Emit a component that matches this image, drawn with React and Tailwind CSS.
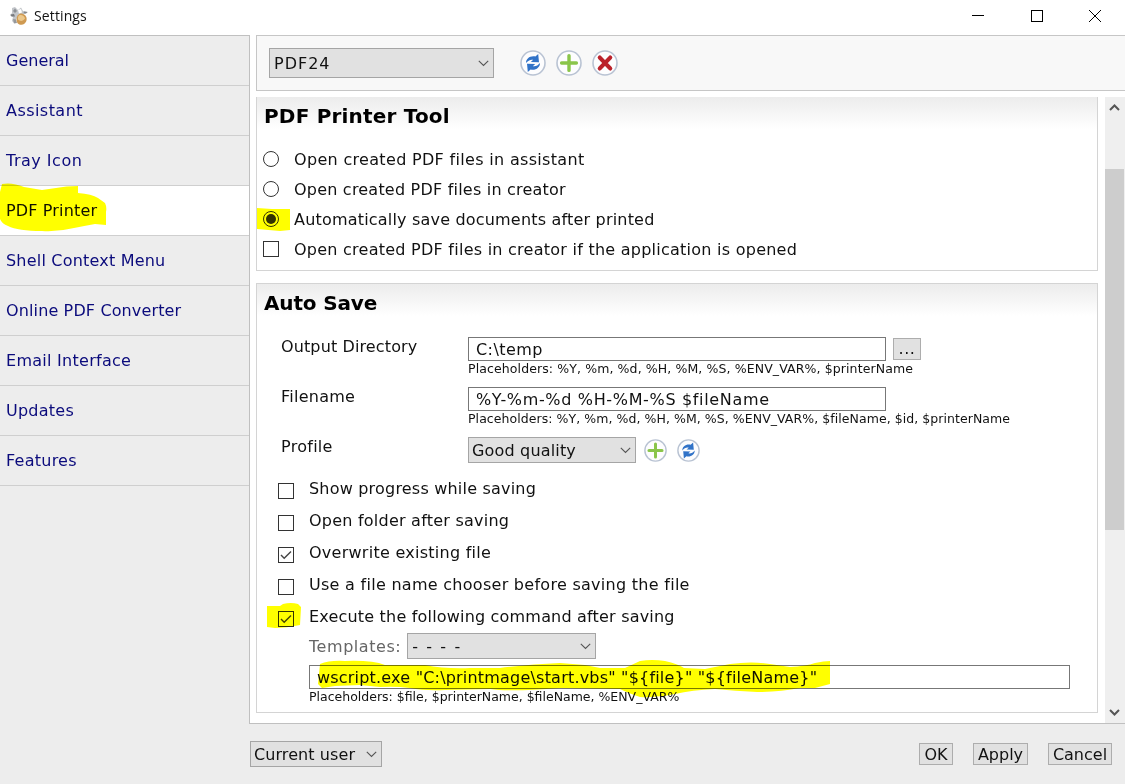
const SANS = "font-['DejaVu_Sans',sans-serif]";

function Chevron() {
  return (
    <svg width="11" height="7" viewBox="0 0 11 7" fill="none" stroke="#555" strokeWidth="1.1" className="shrink-0">
      <path d="M0.8 0.8L5.5 5.5L10.2 0.8" />
    </svg>
  );
}

function Select({ text, className, textClass = "" }) {
  return (
    <button className={`flex items-center justify-between border border-[#a5a5a5] bg-[#e1e1e1] text-left ${className}`}>
      <span className={`whitespace-nowrap ${textClass}`}>{text}</span>
      <Chevron />
    </button>
  );
}

const ARROW = "M6 13C6 8.5 10 5.4 15.4 6.4L18.2 4L19 12.2L10.8 12L13.2 9.8C10.4 9.2 8 10.6 6 13Z";

function RoundIcon({ kind, size }) {
  return (
    <svg width={size} height={size} viewBox="0 0 26 26" fill="none" className="shrink-0">
      <circle cx="13" cy="13" r="12" fill="#fdfdfe" stroke="#b9c3d3" strokeWidth="1.6" />
      {kind === "add" && <path d="M13 5.6V20.4M5.6 13H20.4" stroke="#8ac54a" strokeWidth="3.4" strokeLinecap="round" />}
      {kind === "delete" && <path d="M7.8 7.6L18.2 18.4M18.2 7.6L7.8 18.4" stroke="#bb222b" strokeWidth="4.2" strokeLinecap="round" />}
      {kind === "sync" && (
        <g fill="#3173c8">
          <path d={ARROW} />
          <path d={ARROW} transform="rotate(180 13 13)" />
        </g>
      )}
    </svg>
  );
}

function Box({ checked, className = "bg-white" }) {
  return (
    <span className={`flex h-4 w-4 shrink-0 items-center justify-center border border-[#333] ${className}`}>
      {checked && (
        <svg width="12" height="10" viewBox="0 0 12 10" fill="none" stroke="#444" strokeWidth="1.4">
          <path d="M1 5L4.2 8.3L11 1.4" />
        </svg>
      )}
    </span>
  );
}

function Radio({ checked }) {
  return (
    <span className="flex h-4 w-4 shrink-0 items-center justify-center rounded-full border border-[#333] bg-white">
      {checked && <span className="h-2.5 w-2.5 rounded-full bg-[#333]" />}
    </span>
  );
}

const nav = [
  { text: "General", track: "" },
  { text: "Assistant", track: "tracking-[0.45px]" },
  { text: "Tray Icon", track: "tracking-[0.5px]" },
  { text: "PDF Printer", track: "tracking-[0.15px]" },
  { text: "Shell Context Menu", track: "tracking-[0.2px]" },
  { text: "Online PDF Converter", track: "tracking-[0.13px]" },
  { text: "Email Interface", track: "tracking-[0.27px]" },
  { text: "Updates", track: "tracking-[0.25px]" },
  { text: "Features", track: "tracking-[0.25px]" },
];

const printerOptions = [
  { text: "Open created PDF files in assistant", radio: true, track: "tracking-[0.32px]" },
  { text: "Open created PDF files in creator", radio: true, track: "tracking-[0.21px]" },
  { text: "Automatically save documents after printed", radio: true, checked: true, track: "tracking-[0.19px]" },
  { text: "Open created PDF files in creator if the application is opened", track: "tracking-[0.25px]" },
];

const saveOptions = [
  { text: "Show progress while saving", track: "tracking-[0.2px]" },
  { text: "Open folder after saving", track: "tracking-[0.23px]" },
  { text: "Overwrite existing file", checked: true, track: "tracking-[0.26px]" },
  { text: "Use a file name chooser before saving the file", track: "tracking-[0.28px]" },
  { text: "Execute the following command after saving", checked: true, track: "tracking-[0.19px]" },
];

function Logo() {
  return (
    <svg width="20" height="20" viewBox="0 0 20 20" className="shrink-0">
      <path d="M3 2L6 1L9 4L12 1.5L14 5L19 6L16 8L10 8L8 12L5 17L3 15L4 11L1 9.5L3 7Z" fill="#c3c6ca" />
      <path d="M6 2.5L8 5L6 7L4 5Z" fill="#8b8f94" />
      <path d="M1.5 8.5L5 8L6 10.5L2.5 10.5Z" fill="#77797d" />
      <path d="M9 4L12 3L13 6.5L10 7.5Z" fill="#ffffff" />
      <path d="M15 5.5L18.5 6L17 7.5L14.5 7.2Z" fill="#85888c" />
      <path d="M4 13L7 13.5L8 17L5 17.5Z" fill="#96989b" />
      <path d="M9.5 8.5C12 6.5 16 8 17.3 11C18.5 14.5 16.5 18.5 12.5 18.8C9 19 7.2 16 7.6 13C7.8 11 8.3 9.5 9.5 8.5Z" fill="#cf9a52" />
      <path d="M10 9.5C12.5 8.2 15.5 10 16 12.5C14 15.5 11 15.5 9 13.5C8.8 12 9 10.5 10 9.5Z" fill="#ecc88c" />
    </svg>
  );
}

function Marker() {
  return (
    <svg width="1125" height="784" fill="#ffff00" className="pointer-events-none absolute inset-0 mix-blend-multiply">
      <path d="M2 184Q12 182 24 187L42 190L56 188Q66 186 78 186V193Q92 194 98 198L105 203Q107 207 106 212V225L95 224Q84 226 74 228Q58 232 42 231Q18 231 8 226Q2 224 0 219V192Z" />
      <path d="M257 208L272 209L290 209V230L280 231L257 229Z" />
      <path d="M267 606H280L283 604Q291 602 298 604L301 607L300 625Q286 628 275 628L267 627Z" />
      <path d="M318 684L320 664Q330 660 345 661Q372 660 385 665H425Q445 669 470 668H500Q530 664 560 663L585 665L600 668H625L640 661Q652 659 665 661Q678 664 684 668L705 669L730 664Q752 661 770 664L790 667Q806 666 815 663Q824 661 830 661V684L815 688H800Q780 692 757 692Q735 691 715 689Q692 690 675 694Q658 698 640 697Q628 693 620 689L560 688Q510 692 490 689L445 690Q425 691 410 688Q395 686 380 687L360 685L335 686L322 688Z" />
    </svg>
  );
}

export default function App() {
  return (
    <div className={`relative flex h-[784px] w-[1125px] flex-col overflow-hidden bg-white text-[16px] leading-5 text-[#111] ${SANS}`}>
      <header className="flex h-[35px] shrink-0 items-center justify-between bg-white pb-[3px] pl-[9px] pr-6">
        <div className="flex items-center gap-[5px]">
          <Logo />
          <span className="font-['Open_Sans',sans-serif] text-[14px] tracking-[0.12px]">Settings</span>
        </div>
        <div className="flex items-center gap-[46.5px]">
          <svg width="12" height="12"><path d="M0 5.5H12" stroke="#000" /></svg>
          <svg width="12" height="12"><rect x="0.5" y="0.5" width="11" height="11" fill="none" stroke="#000" /></svg>
          <svg width="12" height="12"><path d="M0 0L12 12M12 0L0 12" stroke="#000" /></svg>
        </div>
      </header>

      <div className="flex h-[689px] shrink-0">
        <nav className="w-[250px] shrink-0 border-r border-t border-[#c0c0c0] bg-[#ededed]">
          {nav.map((n) => (
            <div key={n.text} className={`flex h-[50px] items-center border-b border-[#cfcfcf] pl-[6px] ${n.track} ${n.text === "PDF Printer" ? "bg-white text-[#111]" : "text-[#0b0b7c]"}`}>
              {n.text}
            </div>
          ))}
        </nav>

        <main className="flex min-w-0 flex-1 flex-col border-b border-[#c0c0c0] pl-[6px]">
          <div className="flex h-[56px] shrink-0 items-center border-y border-l border-[#c6c6c6] bg-[#f8f8f8] pl-3">
            <Select text="PDF24" className="h-[30px] w-[225px] pl-1 pr-1" textClass="pt-0.5 tracking-[1px]" />
            <div className="ml-[26px] flex gap-[10px]">
              <RoundIcon kind="sync" size={26} />
              <RoundIcon kind="add" size={26} />
              <RoundIcon kind="delete" size={26} />
            </div>
          </div>

          <div className="mt-[6px] flex min-h-0 flex-1">
            <div className="w-[842px] shrink-0">
              <section className="h-[174px] border-x border-b border-[#d4d4d4] bg-linear-to-b from-[#ececec] to-white to-[32px]">
                <h2 className="pl-[7px] pt-[9px] text-[20px] font-bold leading-5 tracking-[0.19px] text-black">PDF Printer Tool</h2>
                <div className="mt-[18px] flex flex-col pl-[6px]">
                  {printerOptions.map((o) => (
                    <label key={o.text} className="flex h-[30px] items-center gap-[15px] whitespace-nowrap">
                      {o.radio ? <Radio checked={o.checked} /> : <Box />}
                      <span className={`pt-0.5 ${o.track}`}>{o.text}</span>
                    </label>
                  ))}
                </div>
              </section>

              <section className="mt-3 h-[430px] border border-[#d4d4d4] bg-linear-to-b from-[#ececec] to-white to-[32px]">
                <h2 className="pl-[7px] pt-[9px] text-[20px] font-bold leading-5 tracking-[-0.15px] text-black">Auto Save</h2>

                <div className="mt-[24px] flex h-[50px] pl-[24px]">
                  <span className="w-[187px] shrink-0 tracking-[0.12px]">Output Directory</span>
                  <div>
                    <div className="flex items-center gap-[7px]">
                      <div className="flex h-6 w-[418px] items-center border border-[#777] bg-white pl-[7px] pt-px tracking-[0.45px]">C:\temp</div>
                      <button className="h-[22px] w-[28px] border border-[#adadad] bg-[#e1e1e1] leading-5 tracking-[0.6px]">...</button>
                    </div>
                    <div className="whitespace-nowrap text-[12.5px] leading-4 tracking-[0.11px]">Placeholders: %Y, %m, %d, %H, %M, %S, %ENV_VAR%, $printerName</div>
                  </div>
                </div>
                <div className="flex h-[50px] pl-[24px]">
                  <span className="w-[187px] shrink-0 tracking-[0.25px]">Filename</span>
                  <div>
                    <div className="flex h-6 w-[418px] items-center border border-[#777] bg-white pl-[7px] pt-px tracking-[0.66px]">%Y-%m-%d %H-%M-%S $fileName</div>
                    <div className="whitespace-nowrap text-[12.5px] leading-4 tracking-[0.06px]">Placeholders: %Y, %m, %d, %H, %M, %S, %ENV_VAR%, $fileName, $id, $printerName</div>
                  </div>
                </div>
                <div className="flex h-[36px] pl-[24px]">
                  <span className="w-[187px] shrink-0 tracking-[0.28px]">Profile</span>
                  <div className="flex h-[26px] items-center">
                    <Select text="Good quality" className="h-[26px] w-[168px] pl-[3px] pr-1" textClass="pt-0.5 tracking-[0.17px]" />
                    <div className="ml-2 flex gap-[10px]">
                      <RoundIcon kind="add" size={23} />
                      <RoundIcon kind="sync" size={23} />
                    </div>
                  </div>
                </div>

                <div className="flex flex-col pl-[21px] pt-[6px]">
                  {saveOptions.map((o) => (
                    <label key={o.text} className="flex h-8 gap-[15px] whitespace-nowrap">
                      <span className="pt-1"><Box checked={o.checked} /></span>
                      <span className={o.track}>{o.text}</span>
                    </label>
                  ))}
                </div>
                <div className="-mt-[6px] flex items-center gap-[6px] pl-[52px] text-[#666]">
                  <span className="pt-0.5 tracking-[0.55px]">Templates:</span>
                  <Select text="- - - -" className="h-[26px] w-[189px] pl-[4px] pr-1 text-[#111]" textClass="pt-0.5 tracking-[1.6px]" />
                </div>
                <div className="pl-[52px] pt-[6px]">
                  <div className="flex h-6 w-[761px] items-center border border-[#777] bg-white pl-[7px] pt-px tracking-[0.2px]">{'wscript.exe "C:\\printmage\\start.vbs" "${file}" "${fileName}"'}</div>
                  <div className="whitespace-nowrap text-[12.5px] leading-4">Placeholders: $file, $printerName, $fileName, %ENV_VAR%</div>
                </div>
              </section>
            </div>

            <div className="ml-[7px] flex flex-1 flex-col bg-[#efefef]">
              <svg width="20" height="20" fill="none" stroke="#555" strokeWidth="2" className="shrink-0"><path d="M5 13L9.5 8.5L14 13" /></svg>
              <div className="mt-[52px] h-[361px] w-[19px] bg-[#cdcdcd]" />
              <svg width="20" height="20" fill="none" stroke="#555" strokeWidth="2" className="mt-auto shrink-0"><path d="M5 7L9.5 11.5L14 7" /></svg>
            </div>
          </div>
        </main>
      </div>

      <footer className="flex flex-1 items-center justify-between bg-[#ededed] pl-[250px] pr-[13px]">
        <Select text="Current user" className="h-[26px] w-[132px] pl-[3px] pr-1" textClass="pt-0.5 tracking-[0.08px]" />
        <div className="flex">
          <button className="flex h-[22px] w-[34px] items-center justify-center border border-[#adadad] bg-[#e1e1e1] pt-px">OK</button>
          <button className="ml-5 flex h-[22px] w-[55px] items-center justify-center border border-[#adadad] bg-[#e1e1e1] pt-px">Apply</button>
          <button className="ml-5 flex h-[22px] w-[64px] items-center justify-center border border-[#adadad] bg-[#e1e1e1] pt-px">Cancel</button>
        </div>
      </footer>

      <Marker />
    </div>
  );
}
